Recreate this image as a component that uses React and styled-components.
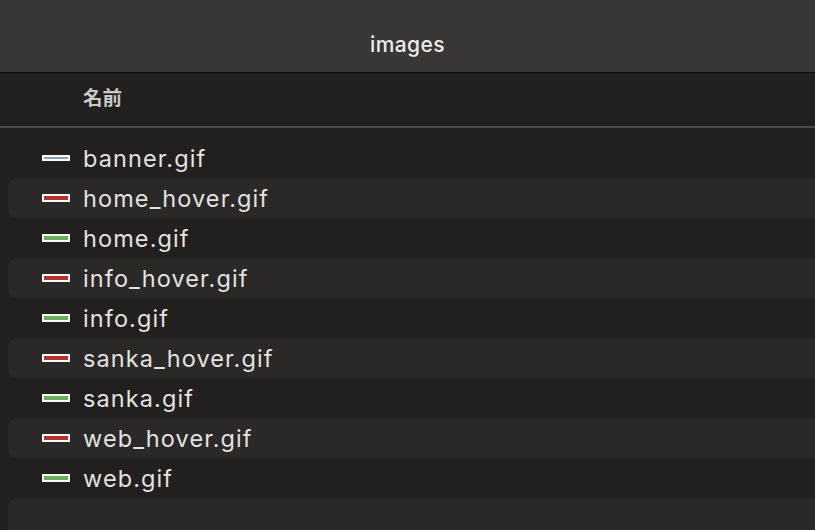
import React from 'react'
import styled, { createGlobalStyle } from 'styled-components'

const files = [
  { name: 'banner.gif', kind: 'banner' },
  { name: 'home_hover.gif', kind: 'red' },
  { name: 'home.gif', kind: 'green' },
  { name: 'info_hover.gif', kind: 'red' },
  { name: 'info.gif', kind: 'green' },
  { name: 'sanka_hover.gif', kind: 'red' },
  { name: 'sanka.gif', kind: 'green' },
  { name: 'web_hover.gif', kind: 'red' },
  { name: 'web.gif', kind: 'green' },
  { name: '', kind: null },
]

const App = () => (
  <Window>
    <GlobalStyle />
    <TitleBar>images</TitleBar>
    <ColumnHead>
      <ColumnLabel>名前</ColumnLabel>
    </ColumnHead>
    <List>
      {files.map((file, i) => (
        <Row key={i} striped={i % 2 === 1}>
          {file.kind && <Thumb kind={file.kind} />}
          <FileName>{file.name}</FileName>
        </Row>
      ))}
    </List>
  </Window>
)

const GlobalStyle = createGlobalStyle`
  html, body {
    margin: 0;
    background: #21201e;
    overflow: hidden;
  }
`

const Window = styled.div`
  width: 815px;
  height: 530px;
  display: flex;
  flex-direction: column;
  background: #21201e;
  font-family: Inter, 'Noto Sans CJK JP', sans-serif;
  overflow: hidden;
`

const TitleBar = styled.div`
  height: 73px;
  box-sizing: border-box;
  padding-top: 16px;
  flex-shrink: 0;
  display: flex;
  align-items: center;
  justify-content: center;
  background: #383735;
  border-bottom: 1px solid #0c0c0b;
  color: #ececec;
  font-size: 21px;
  font-weight: 500;
  letter-spacing: 0.4px;
`

const ColumnHead = styled.div`
  height: 55px;
  box-sizing: border-box;
  padding: 0 0 6px 83px;
  flex-shrink: 0;
  display: flex;
  align-items: center;
  border-bottom: 2px solid #4a4946;
`

const ColumnLabel = styled.span`
  color: #c9c9c8;
  font-size: 19.5px;
  font-weight: 700;
  font-family: 'Noto Sans CJK JP', sans-serif;
`

const List = styled.div`
  display: flex;
  flex-direction: column;
  padding: 10px 0 0 8px;
`

const Row = styled.div`
  height: 40px;
  flex-shrink: 0;
  display: flex;
  align-items: center;
  padding-left: 34px;
  gap: 13px;
  border-radius: 9px 0 0 9px;
  background: ${p => (p.striped ? '#2a2927' : 'transparent')};
`

const thumbFill = {
  red: '#b3302d',
  green: '#6aab5d',
}

const Thumb = styled.span`
  width: 24px;
  height: ${p => (p.kind === 'banner' ? '2px' : '4px')};
  flex-shrink: 0;
  border: 2px solid #fafafa;
  background: ${p => thumbFill[p.kind] || '#8aa0aa'};
`

const FileName = styled.span`
  color: #e2e2e1;
  font-size: 23.5px;
  letter-spacing: 1.1px;
`

export default App
